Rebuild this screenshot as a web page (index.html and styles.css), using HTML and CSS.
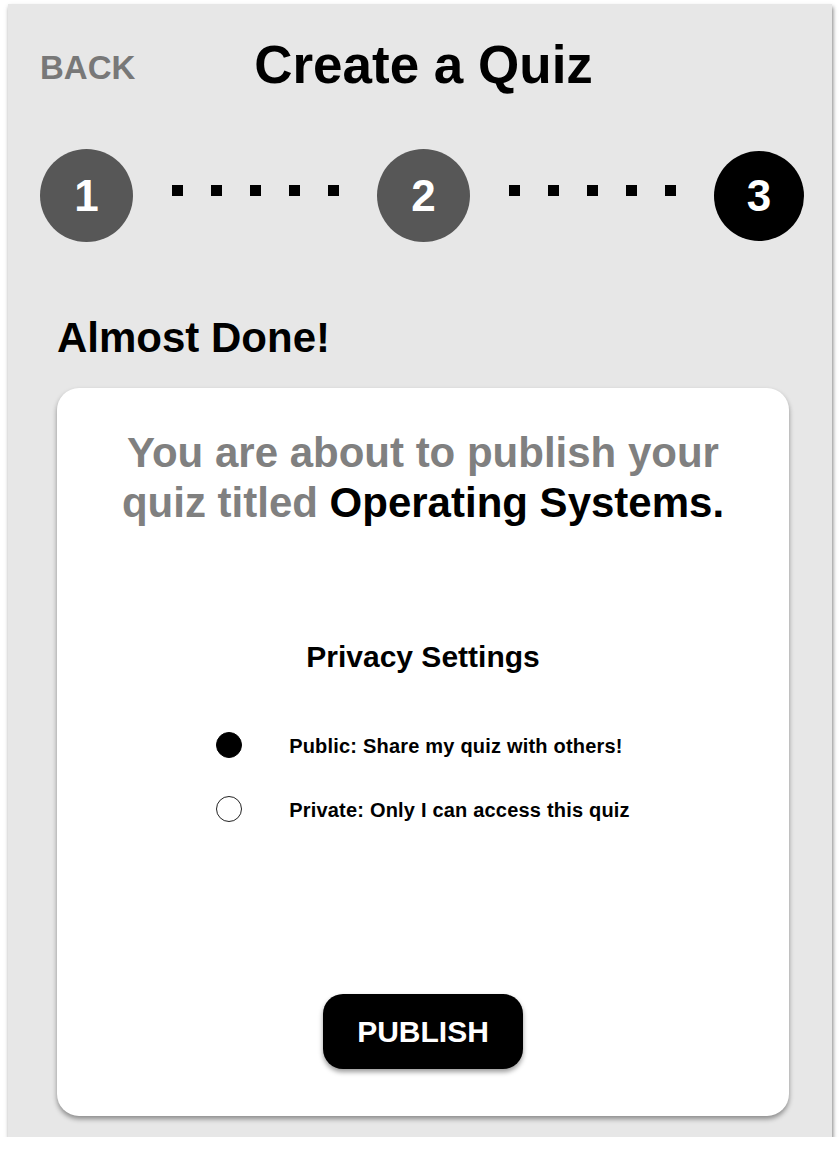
FILE: index.html
```html
<!DOCTYPE html>
<html lang="en">
<head>
<meta charset="utf-8">
<title>Create a Quiz</title>
<link rel="stylesheet" href="styles.css">
</head>
<body>
<div class="panel">
  <header class="header">
    <a class="back">BACK</a>
    <h1 class="title">Create a Quiz</h1>
    <span></span>
  </header>

  <div class="steps">
    <div class="step done">1</div>
    <div class="connector"><i></i><i></i><i></i><i></i><i></i></div>
    <div class="step done">2</div>
    <div class="connector"><i></i><i></i><i></i><i></i><i></i></div>
    <div class="step current">3</div>
  </div>

  <h2 class="section-title">Almost Done!</h2>

  <div class="card">
    <p class="summary">You are about to publish your<br>quiz titled <strong>Operating Systems.</strong></p>

    <h3 class="privacy-title">Privacy Settings</h3>

    <div class="options">
      <label class="option">
        <span class="radio checked"></span>
        <span class="option-text">Public: Share my quiz with others!</span>
      </label>
      <label class="option">
        <span class="radio"></span>
        <span class="option-text">Private: Only I can access this quiz</span>
      </label>
    </div>

    <button class="publish">PUBLISH</button>
  </div>
</div>
</body>
</html>
```

FILE: styles.css
```css
* { box-sizing: border-box; }

html, body {
  margin: 0;
  padding: 0;
  background: #ffffff;
  font-family: "Liberation Sans", Arial, Helvetica, sans-serif;
}

.panel {
  margin: 4px 0 0 8px;
  width: 824px;
  height: 1133px;
  background: #e7e7e7;
  box-shadow: 1px 3px 4px rgba(0, 0, 0, 0.5);
  padding-top: 27px;
  display: flex;
  flex-direction: column;
}

.header {
  display: grid;
  grid-template-columns: 1fr auto 1fr;
  align-items: center;
  padding: 0 25px 0 32px;
  height: 60px;
}

.back {
  font-size: 33px;
  font-weight: 700;
  color: #787878;
  line-height: 60px;
  padding-top: 7px;
}

.title {
  margin: 0;
  font-size: 53px;
  font-weight: 700;
  line-height: 60px;
  color: #000;
}

.steps {
  display: flex;
  align-items: center;
  margin-top: 58px;
  padding: 0 28px 0 32px;
}

.step {
  width: 93px;
  height: 93px;
  border-radius: 50%;
  color: #fff;
  font-size: 44px;
  font-weight: 700;
  display: flex;
  align-items: center;
  justify-content: center;
  flex: none;
}

.step.done { background: #575757; }

.step.current {
  background: #000;
  width: 90px;
  height: 90px;
}

.connector {
  flex: 1;
  display: flex;
  justify-content: center;
  gap: 28px;
  padding-bottom: 11px;
}

.connector i {
  display: block;
  width: 11px;
  height: 11px;
  background: #000;
}

.section-title {
  margin: 72px 0 0 0;
  padding-left: 49px;
  font-size: 42px;
  line-height: 48px;
  font-weight: 700;
  color: #000;
}

.card {
  margin: 26px 0 0 49px;
  width: 732px;
  height: 728px;
  background: #fff;
  border-radius: 22px;
  box-shadow: 0 3px 5px rgba(0, 0, 0, 0.4);
  display: flex;
  flex-direction: column;
  align-items: center;
  padding: 40px 0 47px;
}

.summary {
  margin: 0;
  text-align: center;
  font-size: 42px;
  line-height: 50px;
  font-weight: 700;
  color: #808080;
}

.summary strong { color: #000; }

.privacy-title {
  margin: 111px 0 0 0;
  font-size: 30px;
  line-height: 36px;
  font-weight: 700;
  color: #000;
}

.options {
  margin-top: 54px;
  display: flex;
  flex-direction: column;
  gap: 32px;
}

.option {
  display: flex;
  align-items: center;
  height: 32px;
  gap: 47px;
}

.radio {
  width: 26px;
  height: 26px;
  border-radius: 50%;
  border: 1.5px solid #222;
  background: #fff;
  flex: none;
}

.radio.checked {
  background: #000;
  border-color: #000;
}

.option-text {
  font-size: 20px;
  font-weight: 700;
  color: #000;
  padding-top: 3px;
  letter-spacing: 0.2px;
}

.publish {
  margin-top: auto;
  width: 200px;
  height: 75px;
  border: none;
  border-radius: 20px;
  background: #000;
  color: #fff;
  font-family: "Liberation Sans", Arial, Helvetica, sans-serif;
  font-size: 30px;
  font-weight: 700;
  box-shadow: 0 3px 5px rgba(0, 0, 0, 0.4);
}
```
